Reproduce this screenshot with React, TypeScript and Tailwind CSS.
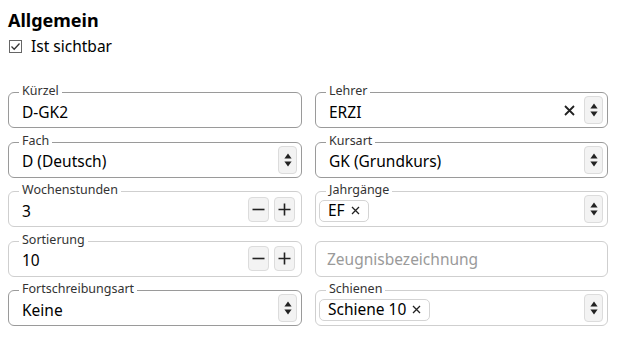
import React from "react";

const font = { fontFamily: '"Noto Sans", "Open Sans", sans-serif' };

function Updown() {
  return (
    <div className="flex h-[28px] w-[19px] items-center justify-center rounded-[4px] border border-[#dcdcdc] bg-[#f3f3f3]">
      <svg width="8" height="14" viewBox="0 0 8 14">
        <path d="M4 0.5 L7.6 5.5 L0.4 5.5 Z" fill="#222" />
        <path d="M4 13.5 L7.6 8.5 L0.4 8.5 Z" fill="#222" />
      </svg>
    </div>
  );
}

function Box({
  label,
  dark,
  children,
}: {
  label?: string;
  dark?: boolean;
  children: React.ReactNode;
}) {
  return (
    <div
      className={
        "relative flex h-[36px] items-center rounded-[6px] border " +
        (dark ? "border-[#9a9a9a]" : "border-[#cfcfcf]")
      }
    >
      {label && (
        <span className="absolute left-[10px] top-[-10px] bg-white px-[3px] text-[12.5px] leading-[16px] text-[#333]">
          {label}
        </span>
      )}
      {children}
    </div>
  );
}

function Value({ children }: { children: React.ReactNode }) {
  return (
    <div className="flex-1 pl-[13px] pt-[3px] text-[15.5px] leading-[20px] text-[#000]">{children}</div>
  );
}

function Chip({ text }: { text: string }) {
  return (
    <div className="ml-[3px] mt-[3px] flex h-[22px] items-center gap-[6px] rounded-[5px] border border-[#d4d4d4] pl-[8px] pr-[8px] text-[15.5px] text-[#000]">
      <span>{text}</span>
      <svg width="9" height="9" viewBox="0 0 9 9">
        <path d="M1 1 L8 8 M8 1 L1 8" stroke="#222" strokeWidth="1.3" />
      </svg>
    </div>
  );
}

function StepBtn({ plus }: { plus?: boolean }) {
  return (
    <div className="flex h-[25px] w-[21px] items-center justify-center rounded-[4px] border border-[#dcdcdc] bg-[#f3f3f3]">
      <svg width="13" height="13" viewBox="0 0 13 13">
        <path d={plus ? "M0.5 6.5 H12.5 M6.5 0.5 V12.5" : "M0.5 6.5 H12.5"} stroke="#222" strokeWidth="1.6" />
      </svg>
    </div>
  );
}

export default function App() {
  return (
    <div className="h-[340px] w-[622px] bg-white pl-[8px] pt-[9px]" style={font}>
      <div className="text-[18px] font-bold leading-[22px] text-[#000]">Allgemein</div>
      <div className="mt-[5px] flex items-center gap-[9px]">
        <div className="ml-[1px] flex h-[13px] w-[13px] items-center justify-center border border-[#666] bg-white">
          <svg width="11" height="11" viewBox="0 0 11 11">
            <path d="M1.5 5.5 L4.2 8.2 L9.5 2.5" stroke="#333" strokeWidth="1.3" fill="none" />
          </svg>
        </div>
        <span className="text-[15.5px] leading-[20px] text-[#000]">Ist sichtbar</span>
      </div>
      <div className="mt-[36px] grid w-[600px] grid-cols-[294px_293px] gap-x-[13px] gap-y-[13.5px]">
        <Box label="Kürzel" dark>
          <Value>D-GK2</Value>
        </Box>
        <Box label="Lehrer" dark>
          <Value>ERZI</Value>
          <svg width="11" height="11" viewBox="0 0 11 11" className="mr-[9px]">
            <path d="M1 1 L10 10 M10 1 L1 10" stroke="#222" strokeWidth="1.8" />
          </svg>
          <div className="mr-[4px]">
            <Updown />
          </div>
        </Box>
        <Box label="Fach" dark>
          <Value>D (Deutsch)</Value>
          <div className="mr-[4px]">
            <Updown />
          </div>
        </Box>
        <Box label="Kursart" dark>
          <Value>GK (Grundkurs)</Value>
          <div className="mr-[4px]">
            <Updown />
          </div>
        </Box>
        <Box label="Wochenstunden">
          <Value>3</Value>
          <div className="mr-[6px] flex gap-[5px]">
            <StepBtn />
            <StepBtn plus />
          </div>
        </Box>
        <Box label="Jahrgänge">
          <div className="flex flex-1">
            <Chip text="EF" />
          </div>
          <div className="mr-[4px]">
            <Updown />
          </div>
        </Box>
        <Box label="Sortierung">
          <Value>10</Value>
          <div className="mr-[6px] flex gap-[5px]">
            <StepBtn />
            <StepBtn plus />
          </div>
        </Box>
        <Box>
          <div className="flex-1 pl-[11px] text-[15.5px] leading-[20px] text-[#9a9a9a]">Zeugnisbezeichnung</div>
        </Box>
        <Box label="Fortschreibungsart" dark>
          <Value>Keine</Value>
          <div className="mr-[4px]">
            <Updown />
          </div>
        </Box>
        <Box label="Schienen">
          <div className="flex flex-1">
            <Chip text="Schiene 10" />
          </div>
          <div className="mr-[4px]">
            <Updown />
          </div>
        </Box>
      </div>
    </div>
  );
}
